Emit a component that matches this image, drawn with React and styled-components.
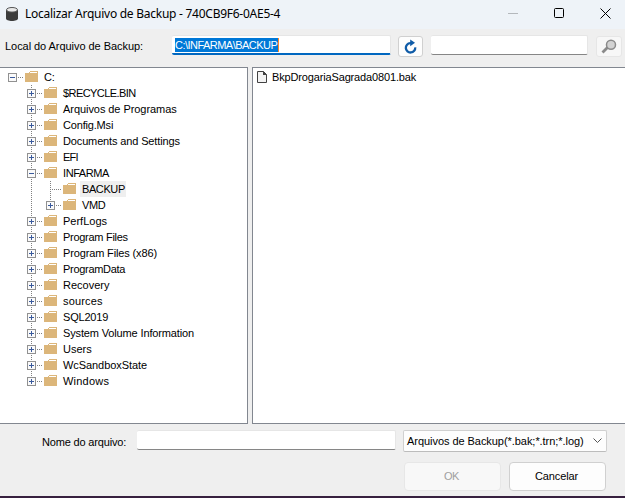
import React from "react";
import styled, { createGlobalStyle } from "styled-components";

const GlobalStyle = createGlobalStyle`
  * { box-sizing: border-box; }
  body { margin: 0; overflow: hidden; }
`;

const Dialog = styled.div`
  display: flex;
  flex-direction: column;
  width: 625px;
  height: 498px;
  background: #efefef;
  border-bottom: 2px solid #37203f;
  color: #000;
  font: 11px/16px "Liberation Sans", Arial, sans-serif;
  white-space: nowrap;
`;

const TitleBar = styled.header`
  display: flex;
  align-items: center;
  flex: none;
  height: 29px;
  padding: 0 14px 2px 6px;
  background: #eef3f8;
`;

const Title = styled.h1`
  flex: 1;
  margin: 0 0 0 7px;
  font: 12px/16px "Noto Sans", "Open Sans", sans-serif;
  letter-spacing: ${(p) => p.$track}px;
`;

const WindowControls = styled.div`
  display: flex;
  gap: 35px;
  svg { display: block; }
`;

const Text = styled.span`
  letter-spacing: ${(p) => p.$track || 0}px;
`;

const Toolbar = styled.div`
  display: flex;
  align-items: flex-start;
  flex: none;
  height: 38px;
  padding: 6px 3px 0 5px;
`;

const ToolbarLabel = styled.label`
  width: 167px;
  padding-top: 3px;
`;

const Field = styled.div`
  width: ${(p) => p.$width}px;
  height: 20px;
  padding: 2px 0 0 3px;
  background: #fff;
  border: 1px solid #e6e6e6;
  border-left-width: 0;
  border-bottom: ${(p) => (p.$active ? "2px solid #0067c0" : "1px solid #868686")};
  border-radius: 2px;
`;

const Selection = styled.span`
  display: block;
  width: 104px;
  height: 14px;
  color: #fff;
  background: #0078d7;
  border-right: 1px solid #ff8728;
  line-height: 15px;
  letter-spacing: -0.53px;
`;

const IconButton = styled.button`
  display: flex;
  align-items: center;
  justify-content: center;
  width: ${(p) => p.$width}px;
  height: 21px;
  margin: 1px ${(p) => p.$right || 0}px 0 ${(p) => p.$left}px;
  padding: 0;
  background: ${(p) => (p.disabled ? "#f7f7f7" : "#fdfdfd")};
  border: 1px solid ${(p) => (p.disabled ? "#e6e6e6" : "#d0d0d0")};
  border-radius: 3px;
`;

const Panels = styled.main`
  display: grid;
  grid-template-columns: 248px 1fr;
  column-gap: 4px;
  flex: none;
  height: 357px;
`;

const Panel = styled.section`
  padding-top: 1px;
  background: #fff;
  border: solid #828790;
  border-width: ${(p) => (p.$side === "left" ? "1px 1px 1px 0" : "1px 0 1px 1px")};
`;

const TreeRow = styled.div`
  display: flex;
  align-items: center;
  height: 16px;
  padding-left: 3px;
  svg { flex: none; }
`;

const NodeName = styled.span`
  height: 16px;
  margin-left: 3px;
  padding: 0 1px 0 2px;
  background: ${(p) => (p.$selected ? "#efefef" : "transparent")};
  letter-spacing: ${(p) => p.$track || 0}px;
`;

const FileRow = styled.div`
  display: flex;
  align-items: center;
  gap: 5px;
  height: 16px;
  padding-left: 4px;
`;

const Footer = styled.footer`
  display: flex;
  flex-direction: column;
  gap: 10px;
  padding: 6px 18px 0 0;
`;

const FooterRow = styled.div`
  display: flex;
  justify-content: flex-end;
  align-items: flex-start;
  padding-right: ${(p) => p.$inset || 0}px;
`;

const NameLabel = styled.label`
  width: 95px;
  padding-top: 4px;
`;

const Select = styled.div`
  display: flex;
  align-items: center;
  justify-content: space-between;
  width: 204px;
  height: 22px;
  margin-left: 7px;
  padding: 0 4px 0 3px;
  background: #fdfdfd;
  border: 1px solid #d0d0d0;
  border-bottom-color: #bcbcbc;
  border-radius: 2px;
`;

const Button = styled.button`
  width: 97px;
  height: 29px;
  margin-left: 8px;
  padding: 0 2px 1px 0;
  color: ${(p) => (p.disabled ? "#a0a0a0" : "#000")};
  background: ${(p) => (p.disabled ? "#f8f8f8" : "#fdfdfd")};
  border: 1px solid ${(p) => (p.disabled ? "#e7e7e7" : "#d0d0d0")};
  border-radius: 4px;
  font: inherit;
`;

const DatabaseIcon = () => (
  <svg width="12" height="14" viewBox="0 0 12 14">
    <path d="M0 3v8.5C0 13 2.7 14 6 14s6-1 6-2.5V3z" fill="#3c3c3c" />
    <ellipse cx="6" cy="2.8" rx="5.5" ry="2.3" fill="#e8e8e8" stroke="#555" />
  </svg>
);

const RefreshIcon = () => (
  <svg width="14" height="15" viewBox="0 0 14 15">
    <path d="M7.5 4.1H6.3a4.7 4.7 0 1 0 4.9 4.2" fill="none" stroke="#0f5ba7" strokeWidth="2.3" />
    <path d="M6.2 0.4l4.8 3.4-4.8 3.4z" fill="#0f5ba7" />
  </svg>
);

const SearchIcon = () => (
  <svg width="16" height="15" viewBox="0 0 16 15">
    <path d="M1.5 13.5l5-5" stroke="#8a8a8a" strokeWidth="2.8" />
    <circle cx="10" cy="5.7" r="4.5" fill="#d2d2d2" stroke="#8a8a8a" strokeWidth="1.5" />
  </svg>
);

const FolderIcon = () => (
  <svg width="14" height="12" viewBox="0 0 14 12" shapeRendering="crispEdges">
    <path d="M0 2h4l1-2h8v11H0z" fill="#dcb67a" />
    <path d="M5 1h7v1H5z" fill="#fff" />
  </svg>
);

const FileIcon = () => (
  <svg width="10" height="12" viewBox="0 0 10 12">
    <path d="M.5.5h6l3 3v8h-9z" fill="#f3f3f3" stroke="#424242" />
    <path d="M6 0l4 4H6z" fill="#424242" />
  </svg>
);

// Connector lines and the expand box for one row of the tree.
const Branch = ({ level, kind, end, trunk, open }) => {
  const width = 22 + level * 19;
  const cx = 9 + level * 19;
  return (
    <svg width={width} height="16" shapeRendering="crispEdges" fill="none">
      <g stroke="#808080" strokeDasharray="1 1">
        {level > 0 && <path d={`M${cx + 0.5} 0V${end ? 8 : 16}`} />}
        {trunk && <path d="M28.5 0V16" />}
        <path d={`M${cx} 8.5H${width - 1}`} />
      </g>
      {kind !== "leaf" && (
        <g>
          <rect x={cx - 3.5} y="4.5" width="8" height="8" fill="#fafafa" stroke="#919191" />
          <path d={`M${cx - 2} 8.5h5${open ? "" : `M${cx + 0.5} 6v5`}`} stroke="#3a5a9c" />
        </g>
      )}
    </svg>
  );
};

const nodes = [
  { name: "C:", level: 0, open: true, track: -0.3 },
  { name: "$RECYCLE.BIN", level: 1, track: -0.57 },
  { name: "Arquivos de Programas", level: 1, track: -0.06 },
  { name: "Config.Msi", level: 1, track: -0.18 },
  { name: "Documents and Settings", level: 1, track: -0.14 },
  { name: "EFI", level: 1, track: -0.8 },
  { name: "INFARMA", level: 1, open: true, track: -0.42 },
  { name: "BACKUP", level: 2, kind: "leaf", trunk: true, selected: true, track: -0.4 },
  { name: "VMD", level: 2, trunk: true, end: true, track: -0.4 },
  { name: "PerfLogs", level: 1 },
  { name: "Program Files", level: 1, track: -0.28 },
  { name: "Program Files (x86)", level: 1, track: -0.14 },
  { name: "ProgramData", level: 1, track: -0.3 },
  { name: "Recovery", level: 1 },
  { name: "sources", level: 1, track: 0.15 },
  { name: "SQL2019", level: 1, track: -0.2 },
  { name: "System Volume Information", level: 1, track: -0.14 },
  { name: "Users", level: 1 },
  { name: "WcSandboxState", level: 1, track: -0.07 },
  { name: "Windows", level: 1, end: true, track: 0.22 },
];

export default function App() {
  return (
    <>
      <GlobalStyle />
      <Dialog>
        <TitleBar>
          <DatabaseIcon />
          <Title $track={-0.26}>Localizar Arquivo de Backup - 740CB9F6-0AE5-4</Title>
          <WindowControls>
            <svg width="11" height="11"><path d="M0 5.5h10" stroke="#b4b8bc" /></svg>
            <svg width="11" height="11"><rect x=".5" y=".5" width="9" height="9" rx="1" fill="none" stroke="#000" /></svg>
            <svg width="11" height="11"><path d="M.5.5l10 10m0-10l-10 10" stroke="#000" /></svg>
          </WindowControls>
        </TitleBar>
        <Toolbar>
          <ToolbarLabel><Text $track={-0.05}>Local do Arquivo de Backup:</Text></ToolbarLabel>
          <Field $width={219} $active>
            <Selection>C:\INFARMA\BACKUP</Selection>
          </Field>
          <IconButton $width={25} $left={7} $right={8}><RefreshIcon /></IconButton>
          <Field $width={157} />
          <IconButton $width={26} $left={8} disabled><SearchIcon /></IconButton>
        </Toolbar>
        <Panels>
          <Panel $side="left">
            {nodes.map((n) => (
              <TreeRow key={n.name}>
                <Branch {...n} />
                <FolderIcon />
                <NodeName $selected={n.selected} $track={n.track}>{n.name}</NodeName>
              </TreeRow>
            ))}
          </Panel>
          <Panel $side="right">
            <FileRow><FileIcon /><Text $track={-0.15}>BkpDrogariaSagrada0801.bak</Text></FileRow>
          </Panel>
        </Panels>
        <Footer>
          <FooterRow>
            <NameLabel><Text $track={-0.17}>Nome do arquivo:</Text></NameLabel>
            <Field $width={259} />
            <Select>
              <Text $track={-0.05}>Arquivos de Backup(*.bak;*.trn;*.log)</Text>
              <svg width="9" height="6"><path d="M.5.5l4 4 4-4" fill="none" stroke="#555" /></svg>
            </Select>
          </FooterRow>
          <FooterRow $inset={1}>
            <Button disabled><Text $track={-0.5}>OK</Text></Button>
            <Button><Text $track={-0.1}>Cancelar</Text></Button>
          </FooterRow>
        </Footer>
      </Dialog>
    </>
  );
}
